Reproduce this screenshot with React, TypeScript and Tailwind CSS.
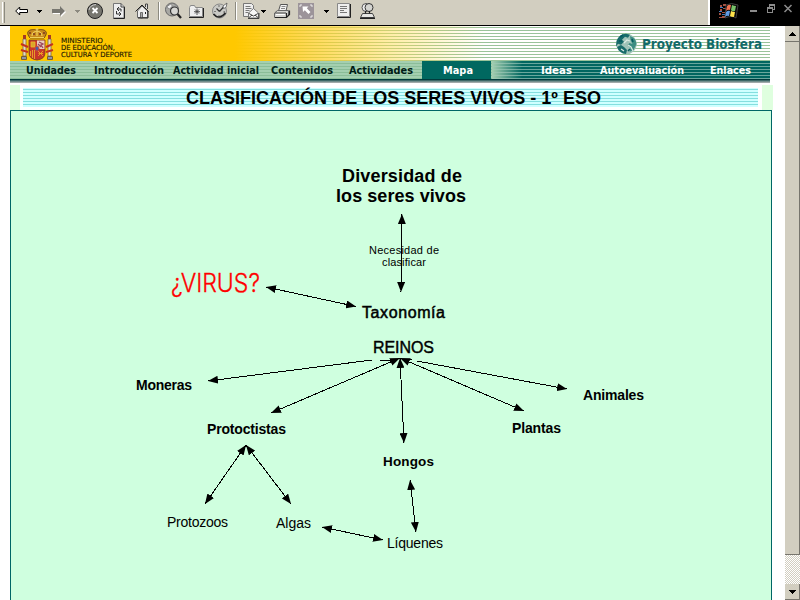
import React from 'react';

type Box = { children?: React.ReactNode; w?: number };

function Glyph({ children, w = 18 }: Box) {
  return (
    <svg width={w} height={20} viewBox={`0 0 ${w} 20`} className="block shrink-0 overflow-visible">
      {children}
    </svg>
  );
}

function Caret({ gray }: { gray?: boolean }) {
  return (
    <svg width={6} height={20} viewBox="0 0 6 20" className="block shrink-0" shapeRendering="crispEdges">
      <path d="M0 8h5v1h-1v1h-1v1h-1v-1h-1v-1h-1z" fill={gray ? '#8c8a80' : '#000'} />
    </svg>
  );
}

function Separator() {
  return <div className="h-[18px] w-[2px] shrink-0 border-l border-[#8c8a80] bg-white" />;
}

function Toolbar() {
  return (
    <div className="flex h-[26px] shrink-0 border-b border-black bg-[#d2cec0]">
      <div className="flex w-[708px] items-start pt-[2px] pl-[2px]">
        <div className="mr-[10px] h-[21px] w-[3px] shrink-0 border-r border-l border-r-[#8c8a80] border-l-white bg-[#d2cec0]" />
        <div className="mr-[9px]">
          <Glyph w={13}>
            <path d="M.7 9l4-4v2.500h7.800v3H4.700V13z" fill="#fff" stroke="#000" strokeWidth="1" />
          </Glyph>
        </div>
        <div className="mr-[9px]"><Caret /></div>
        <div className="mr-[8px]">
          <Glyph w={15}>
            <path d="M1 8h8V5l5 5-5 5v-3H1z" fill="#fff" />
            <path d="M0 7h8V4l5 5-5 5v-3H0z" fill="#77766f" />
          </Glyph>
        </div>
        <div className="mr-[6px]"><Caret gray /></div>
        <div className="mr-[7px]">
          <Glyph w={18}>
            <circle cx="8" cy="9" r="7.500" fill="#77766f" stroke="#222" />
            <path d="M2 8q1-5 7-5.500" fill="none" stroke="#ccc" />
            <path d="M5.500 6l5 5M10.500 6l-5 5" stroke="#fff" strokeWidth="1.800" />
          </Glyph>
        </div>
        <div className="mr-[9px]">
          <Glyph w={14}>
            <path d="M1.500 1.500h7.500l3 3v11.500h-10.500z" fill="#eee" stroke="#777" />
            <path d="M12.500 5v11.500h-11" fill="none" stroke="#222" />
            <path d="M9 1.500v3.500h3.500" fill="none" stroke="#444" />
            <path d="M9 9.500V7H5M7 5L5 7l2 2M4.500 9v3H9M7 10l2 2-2 2" fill="none" stroke="#333" />
          </Glyph>
        </div>
        <div className="mr-[7px]">
          <Glyph w={16}>
            <path d="M2.500 9v6.500h10V9L7 4z" fill="#eee" stroke="#666" />
            <path d="M.5 9.500L7 3l6.500 6.500" fill="none" stroke="#222" />
            <path d="M10.500 5V2h2v5" fill="#ddd" stroke="#444" />
            <path d="M5.500 10.500h2V16h-2z" fill="#aaa" stroke="#555" strokeWidth=".8" />
            <path d="M10.500 10v2M13 9v7H3" fill="none" stroke="#222" />
          </Glyph>
        </div>
        <Separator />
        <div className="ml-[5px] mr-[5px]">
          <Glyph>
            <circle cx="7" cy="7.500" r="6.500" fill="#a8a8a4" stroke="#666" />
            <path d="M1.500 5l4-3 2 2-3 3zM9 2l3 2" fill="#eee" stroke="#888" />
            <circle cx="9.500" cy="9" r="4" fill="#d6d6d2" stroke="#333" strokeWidth="1.200" />
            <path d="M12.500 12l3.500 4" stroke="#222" strokeWidth="2.300" />
          </Glyph>
        </div>
        <div className="mr-[6px]">
          <Glyph>
            <path d="M1.500 5.500l1-2h4l1 2h7v9h-13z" fill="#eee" stroke="#888" />
            <path d="M1 15.500h14.500V6" fill="none" stroke="#222" />
            <path d="M9 6.500v6.500M6 9.700h6M7 7.500l4 4M11 7.500l-4 4" stroke="#444" strokeWidth=".9" />
          </Glyph>
        </div>
        <div className="mr-[5px]">
          <Glyph>
            <circle cx="7.500" cy="9" r="7" fill="#c9c9c5" stroke="#888" />
            <path d="M1.500 12q5.500 6.500 12-1" fill="none" stroke="#222" strokeWidth="1.700" />
            <path d="M7.500 9.500l4.500-5M7.500 9.500l-3-3M7 3.500v1M2.500 9.500h1M7 13.500v1M11.500 10h1.500" fill="none" stroke="#333" strokeWidth="1.200" />
            <path d="M11 4l4-3-1 4.500-2.500 1z" fill="#fff" stroke="#555" strokeWidth=".8" />
          </Glyph>
        </div>
        <Separator />
        <div className="ml-[6px]">
          <Glyph>
            <path d="M.5 1.500h8l2 2v11H.5z" fill="#eee" stroke="#777" />
            <path d="M2.500 4.500h5M2.500 6.500h6M2.500 8.500h4M2.500 10.500h3" stroke="#777" />
            <path d="M5.500 11l5-4.500 5 4.500v5h-10z" fill="#f7f7f5" stroke="#777" />
            <path d="M6 11.500l4.500 2.500 4.500-2.500M5 16.500h11V11M6 15.500l3-2.500M15 15.500l-3-2.500" fill="none" stroke="#333" strokeWidth=".9" />
          </Glyph>
        </div>
        <div className="mr-[7px]"><Caret /></div>
        <div className="mr-[6px]">
          <Glyph>
            <path d="M4.500 9l2-6.500h7L12 9z" fill="#f4f4f4" stroke="#555" />
            <path d="M7.500 4.500h4M7 6.500h4" stroke="#888" />
            <path d="M.5 11l3-2.500h11v5l-2 2H.5z" fill="#d4d4d0" stroke="#666" />
            <path d="M1 15.500h11.500l3-3V8.500M12.500 11v4" stroke="#222" fill="none" strokeWidth="1.200" />
            <path d="M2 12h9v1H2z" fill="#fff" /><path d="M1 11h11" stroke="#444" />
          </Glyph>
        </div>
        <div className="mr-[10px]">
          <Glyph w={16}>
            <path d="M0 1h16v16H0z" fill="#9c949a" />
            <path d="M4.500 4.500h6L8.800 6.200l3.700 3.700-2 2-3.700-3.700-1.800 1.800z" fill="#fff" />
            <path d="M2 5V3h2M12 3h2v2M2 13v2h2M14 13v2h-2" stroke="#fff" fill="none" strokeWidth=".8" />
          </Glyph>
        </div>
        <div className="mr-[6px]"><Caret /></div>
        <div className="mr-[5px]">
          <Glyph>
            <path d="M1.500 1.500h12v13h-12z" fill="#eee" stroke="#888" />
            <path d="M1 15.500h13.500V2" fill="none" stroke="#222" />
            <path d="M4 4.500h7M4 6.500h7M4 8.500h4M4 10.500h7" stroke="#777" />
          </Glyph>
        </div>
        <Glyph>
          <path d="M1.500 15.500l2-4h10l2 4z" fill="#e6e6e3" stroke="#444" />
          <circle cx="7" cy="5.500" r="4" fill="#eee" stroke="#555" />
          <circle cx="10" cy="5.500" r="4" fill="#d4d4d0" stroke="#333" />
          <path d="M1 16.300h15M6.500 9v2.500M10.500 9v2.500" stroke="#222" strokeWidth="1.200" />
        </Glyph>
      </div>
      <div className="w-[2px] bg-white" />
      <div className="flex flex-1 bg-black">
        <svg width="90" height="25" viewBox="0 0 90 25" className="block">
          <g shapeRendering="crispEdges">
            <path d="M10 5h2v2h-2zM10 9h2v2h-2zM9 13h2v2h-2zM9 17h3v1H9zM13 4h3v2h-3zM13 8h3v1h-3zM12 12h3v1h-3zM12 16h3v2h-3z" fill="#a35143" />
            <path d="M10 7h3v1h-3zM9 11h3v1H9zM12 14h3v1h-3z" fill="#467abe" />
          </g>
          <path d="M16 5q5-3 12 0l-2 13q-4-3-11 0z" fill="#070707" stroke="#555" strokeWidth=".7" />
          <path d="M17 6q2-2 4-1l-1 5q-2-1-4 1z" fill="#ee704f" />
          <path d="M22 5q2 1 4 1l-1 5q-3 1-4-1z" fill="#78c36b" />
          <path d="M16 12q2-2 4-1l-1 5q-2-1-4 1z" fill="#609be6" />
          <path d="M21 11q2 1 4 1l-1 5q-3 0-4-1z" fill="#ffe34b" />
          <g shapeRendering="crispEdges" stroke="#8c8c8c" fill="none">
            <path d="M40 11h7" strokeWidth="2" />
            <path d="M57.500 7.500h5v5h-5zM57 8.500h6M59.500 7V4.500h5v5H63M59 5.500h6" />
          </g>
          <path d="M74.500 5l7 7M81.500 5l-7 7" stroke="#8c8c8c" strokeWidth="1.500" />
        </svg>
      </div>
    </div>
  );
}

function CoatOfArms() {
  return (
    <svg width="34" height="36" viewBox="0 0 34 36" className="block">
      <path d="M3 12h3v17H3zM28 12h3v17h-3z" fill="#e6dcc0" stroke="#796451" strokeWidth=".8" />
      <path d="M1 17l7 3M1 23l7 2M33 17l-7 3M33 23l-7 2" stroke="#c4321f" strokeWidth="2" />
      <path d="M1.500 29.500h5v3h-5zM27.500 29.500h5v3h-5z" fill="#8c93a8" stroke="#775f31" />
      <path d="M3 8h3v4H3zM28 8h3v4h-3z" fill="#a43c23" />
      <path d="M10 11C3 2 14 2 17 3c3-1 14-1 7 8z" fill="#c98a1c" stroke="#724619" />
      <path d="M12 9q0-4 5-5 5 1 5 5M17 1v8M10 10.500h14M15.500 2h3" fill="none" stroke="#f0cf5d" strokeWidth="1.200" />
      <path d="M9 6h2M13 7h2M19 7h2M23 6h2" stroke="#7d3822" strokeWidth="1.500" />
      <path d="M9 13h16v13q0 6-8 7-8-1-8-7z" fill="#c8372a" stroke="#75401a" strokeWidth=".8" />
      <path d="M17 13.500h7.500v8.500H17z" fill="#e9cfc0" />
      <path d="M11 15h4v5h-4zM10.500 24v5M12.500 23v8M14.500 23v9" fill="#d8a62c" stroke="#edb629" strokeWidth=".8" />
      <path d="M19 15l4 2-2 1 2 3M18 17l3 3" fill="none" stroke="#9b455d" strokeWidth="1.300" />
      <path d="M18 24l5 5M23 24l-5 5M18.500 26.500h4.500" stroke="#efb325" strokeWidth=".8" />
      <ellipse cx="17" cy="21.500" rx="2" ry="2.500" fill="#4c5ba5" stroke="#cf4c32" />
    </svg>
  );
}

function Globe() {
  return (
    <svg width="23" height="22" viewBox="0 0 23 22" className="block">
      <circle cx="11.500" cy="11" r="10.300" fill="#9fc3b8" />
      <path d="M1.500 8Q4 1 11 .7l4 1-2 3-3-1-3 3 2 2-3 3-3-1-2 3z" fill="#176b6a" />
      <path d="M2 14l4-2 3 2 3 3-1 4Q4 20 2 14z" fill="#176b6a" />
      <path d="M15 3q6 2 6.500 8l-3 6-4 2 1-4-3-3 2-2 3 1-2-4z" fill="#3c8c82" />
      <path d="M9 10l3-3 3 1M13 12l3 2 2 4M6 16l3 2" fill="none" stroke="#dcebe4" strokeWidth="1.200" />
      <path d="M5 4l3-2M4 8h3M13 18l2-2M17 6l1 3" stroke="#045b60" strokeWidth="1.600" />
    </svg>
  );
}

function Label({ children, x, w, fill = '#001c16', y = 13, size = 11.3 }: { children: string; x: number; w: number; fill?: string; y?: number; size?: number }) {
  return (
    <text x={x} y={y} textLength={w} lengthAdjust="spacingAndGlyphs" fill={fill} fontSize={size} fontWeight="700" fontFamily="'DejaVu Sans Condensed', 'DejaVu Sans', sans-serif">
      {children}
    </text>
  );
}

function NavItem({ text, width, x, w, active, light }: { text: string; width: number; x: number; w: number; active?: boolean; light?: boolean }) {
  return (
    <a className={`block h-[18px] shrink-0 ${active ? 'bg-[#006860]' : ''}`} style={{ width }}>
      <svg width={width} height="18" className="block overflow-visible">
        <Label x={x} w={w} fill={light || active ? '#ffffff' : '#001c16'}>{text}</Label>
      </svg>
    </a>
  );
}

function Header() {
  return (
    <header className="w-[760px]">
      <div className="flex h-[35px] bg-[linear-gradient(to_right,#ffc800_0px,#ffc800_225px,rgba(255,205,30,0.75)_300px,rgba(255,220,80,0.5)_380px,transparent_475px),repeating-linear-gradient(to_bottom,#ffffff_0px,#ffffff_1px,#99c39b_1px,#99c39b_2px,#ffffff_2px,#ffffff_3px)]">
        <div className="w-[46px] pt-[1px] pl-[10px]"><CoatOfArms /></div>
        <svg width="80" height="35" className="ml-[4px] block" fontFamily="'DejaVu Sans', sans-serif" fontSize="7" fill="#211800" stroke="#211800" strokeWidth=".15">
          <text x="1" y="16.500" textLength="42" lengthAdjust="spacingAndGlyphs">MINISTERIO</text>
          <text x="1" y="23.500" textLength="54" lengthAdjust="spacingAndGlyphs">DE EDUCACIÓN,</text>
          <text x="1" y="30.500" textLength="71" lengthAdjust="spacingAndGlyphs">CULTURA Y DEPORTE</text>
        </svg>
        <div className="ml-auto flex w-[155px] pt-[7px]">
          <Globe />
          <svg width="125" height="26" className="ml-[4px] block overflow-visible">
            <Label x={0} y={16} w={120} size={14.5} fill="#126a69">Proyecto Biosfera</Label>
          </svg>
        </div>
      </div>
      <nav className="flex h-[18px] bg-[linear-gradient(to_right,transparent_0px,transparent_482px,#006660_512px),repeating-linear-gradient(to_bottom,#a4cfb0_0px,#a4cfb0_2px,#8bbd98_2px,#8bbd98_3px)]">
        <div className="flex w-[482px]">
          <NavItem text="Unidades" width={83} x={16} w={50} />
          <NavItem text="Introducción" width={78} x={1} w={70} />
          <NavItem text="Actividad inicial" width={99} x={2} w={86} />
          <NavItem text="Contenidos" width={78} x={1} w={62} />
          <NavItem text="Actividades" width={74} x={1} w={64} />
          <NavItem text="Mapa" width={69} x={21} w={30} active />
        </div>
        <div className="flex flex-1 bg-[repeating-linear-gradient(to_bottom,transparent_0px,transparent_2px,rgba(180,214,201,0.58)_2px,rgba(180,214,201,0.58)_3px)]">
          <NavItem text="Ideas" width={106} x={49} w={31} light />
          <NavItem text="Autoevaluación" width={111} x={2} w={84} light />
          <NavItem text="Enlaces" width={61} x={1} w={41} light />
        </div>
      </nav>
      <div className="h-[4px] border-b border-[#a0aaaa] bg-[linear-gradient(to_bottom,#003b3c_0px,#003b3c_1px,#3b6867_1px,#3b6867_2px,#718e8c_2px)]" />
    </header>
  );
}

function TitleBar() {
  return (
    <div className="flex h-[25px] w-[763px]">
      <div className="w-[10px] bg-[#dfffdf]" />
      <div className="mt-[3px] ml-[3px] h-[19px] w-[735px] bg-[repeating-linear-gradient(to_bottom,#cfffff_0px,#cfffff_1px,#84dfdf_1px,#84dfdf_2px,#cfffff_2px,#cfffff_3px)]">
        <svg width="735" height="21" className="block overflow-visible">
          <text x="163" y="15.500" textLength="415" lengthAdjust="spacingAndGlyphs" fontFamily="'Liberation Sans', Arial, sans-serif" fontWeight="700" fontSize="18">CLASIFICACIÓN DE LOS SERES VIVOS - 1º ESO</text>
        </svg>
      </div>
      <div className="ml-auto w-[11px] bg-[#dfffdf]" />
    </div>
  );
}

type Link = [number, number, number, number, boolean];

// Endpoints of every relation; the flag adds a head at the starting end.
const links: Link[] = [
  [402, 214, 401, 292, true],
  [266, 287, 356, 306.5, true],
  [372, 360, 208, 381, false],
  [400, 358, 271, 413, true],
  [400, 358, 404, 443, true],
  [400, 358, 524, 411, true],
  [417, 361, 567, 389, false],
  [246, 445, 205, 504, true],
  [246, 445, 291, 504, true],
  [322, 527, 383, 540, true],
  [410, 480, 416, 532, true],
];

type Node = { t: string; x: number; y: number; w: number; s: number; b?: boolean; sw?: number };

const nodes: Node[] = [
  { t: 'Diversidad de', x: 342, y: 182, w: 120, s: 18, b: true },
  { t: 'los seres vivos', x: 336, y: 202, w: 130, s: 18, b: true },
  { t: 'Necesidad de', x: 369, y: 254, w: 70, s: 11 },
  { t: 'clasificar', x: 382, y: 266, w: 44, s: 11 },
  { t: 'Taxonomía', x: 362, y: 318, w: 83, s: 16, sw: 0.5 },
  { t: 'REINOS', x: 373, y: 353, w: 61, s: 16, sw: 0.4 },
  { t: 'Moneras', x: 136, y: 390, w: 56, s: 14, b: true },
  { t: 'Protoctistas', x: 207, y: 434, w: 79, s: 14, b: true },
  { t: 'Hongos', x: 383, y: 466, w: 51, s: 13.5, b: true },
  { t: 'Plantas', x: 512, y: 433, w: 49, s: 14, b: true },
  { t: 'Animales', x: 583, y: 400, w: 61, s: 14, b: true },
  { t: 'Protozoos', x: 167, y: 527, w: 61, s: 14 },
  { t: 'Algas', x: 276, y: 528, w: 35, s: 14 },
  { t: 'Líquenes', x: 387, y: 548, w: 56, s: 14 },
];

function ConceptMap() {
  return (
    <main className="h-[490px] w-[762px] overflow-hidden border border-b-0 border-[#006666] bg-[#cfffdf]">
      <svg width="760" height="489" viewBox="11 111 760 489" className="block" fontFamily="'Liberation Sans', Arial, sans-serif">
        <defs>
          <marker id="head" viewBox="0 0 10 8" refX="10" refY="4" markerWidth="10" markerHeight="8" markerUnits="userSpaceOnUse" orient="auto-start-reverse">
            <path d="M0 0L10 4L0 8z" />
          </marker>
        </defs>
        {links.map(([x1, y1, x2, y2, both], i) => (
          <line key={i} x1={x1} y1={y1} x2={x2} y2={y2} stroke="#000" strokeWidth="1" shapeRendering="crispEdges" markerStart={both ? 'url(#head)' : undefined} markerEnd="url(#head)" />
        ))}
        <path d="M380 360.500h12M408 359.500h4" stroke="#000" shapeRendering="crispEdges" />
        {nodes.map((n) => (
          <text key={n.t} x={n.x} y={n.y} textLength={n.w} fontSize={n.s} fontWeight={n.b ? 700 : 400} stroke={n.sw ? '#000' : 'none'} strokeWidth={n.sw}>
            {n.t}
          </text>
        ))}
        <text x="171" y="291.500" textLength="89" lengthAdjust="spacingAndGlyphs" fontSize="25.500" fontWeight="300" fontFamily="Inter, sans-serif" fill="#ff0000" stroke="#ff0000" strokeWidth=".3">¿VIRUS?</text>
      </svg>
    </main>
  );
}

function ScrollButton({ up }: { up?: boolean }) {
  return (
    <div className="flex h-[16px] shrink-0 items-center justify-center border-r border-b border-[#77756d] bg-[#d2cec0]">
      <svg width="7" height="4" viewBox="0 0 7 4" shapeRendering="crispEdges">
        <path d={up ? 'M3 0h1v1h1v1h1v1h1v1H0V3h1V2h1V1h1z' : 'M0 0h7v1H6v1H5v1H4v1H3V3H2V2H1V1H0z'} />
      </svg>
    </div>
  );
}

function Scrollbar() {
  return (
    <div className="flex w-[16px] flex-col border-l border-white">
      <ScrollButton up />
      <div className="h-[513px] border-r border-b border-[#77756d] bg-[#d2cec0]" />
      <div className="flex-1 bg-[conic-gradient(#d2cec0_25%,#ffffff_0_50%,#d2cec0_0_75%,#ffffff_0)] bg-[length:2px_2px]" />
      <ScrollButton />
    </div>
  );
}

export default function App() {
  return (
    <div className="flex h-[600px] w-[800px] flex-col overflow-hidden bg-white">
      <Toolbar />
      <div className="flex min-h-0 flex-1">
        <div className="w-[784px] pl-[10px]">
          <Header />
          <div className="h-[2px]" />
          <TitleBar />
          <ConceptMap />
        </div>
        <Scrollbar />
      </div>
    </div>
  );
}
